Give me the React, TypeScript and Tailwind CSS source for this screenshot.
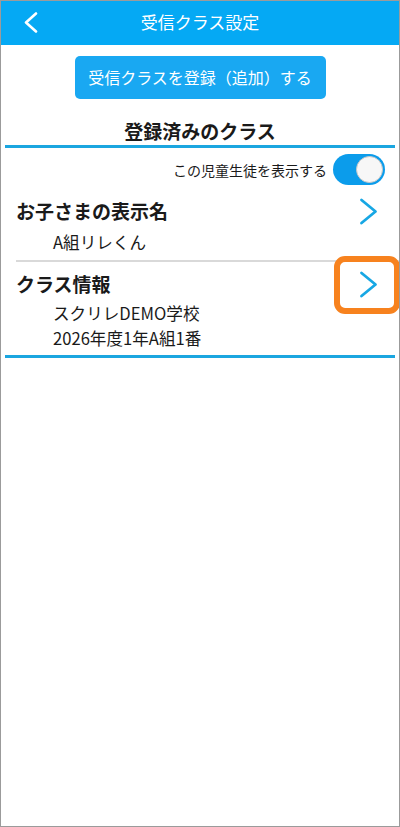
import React, { useState } from "react";

const font = { fontFamily: '"Noto Sans CJK JP", "Noto Sans", sans-serif' };

function Chevron() {
    return (
        <svg width="19" height="27" viewBox="0 0 19 27" fill="none">
            <polyline points="2.5,2 16.5,13.5 2.5,25" stroke="#17a7e4" strokeWidth="2.8" strokeLinecap="round" strokeLinejoin="round" />
        </svg>
    );
}

export default function App() {
    const [visible, setVisible] = useState(true);

    return (
        <div className="relative w-[400px] h-[827px] bg-white border border-[#9b9b9b] overflow-hidden text-[#1a1a1a]" style={font}>
            {/* header */}
            <div className="relative h-[44px] bg-[#05a9f4] flex items-center justify-center">
                <button className="absolute left-[22px] top-[11px]">
                    <svg width="17" height="21" viewBox="0 0 17 21" fill="none">
                        <polyline points="13,1.5 3,10.5 13,19.5" stroke="white" strokeWidth="2.6" strokeLinecap="round" strokeLinejoin="round" />
                    </svg>
                </button>
                <h1 className="text-white text-[17px] leading-[24px] -mt-[2px]">受信クラス設定</h1>
            </div>

            <div className="flex justify-center pt-[11px]">
                <button className="w-[251px] h-[43px] rounded-[5px] bg-[#19a8f2] text-white text-[16px] leading-[43px]">
                    受信クラスを登録（追加）する
                </button>
            </div>

            <div className="mt-[20px] h-[24px] leading-[24px] text-center text-[19px] font-bold">登録済みのクラス</div>
            <div className="mt-[2px] mx-[4px] h-[3px] bg-[#1ba6e0]" />

            <div className="flex justify-end items-center gap-[6px] pt-[6px] pr-[14px]">
                <span className="text-[14px] leading-[20px]">この児童生徒を表示する</span>
                <button
                    onClick={() => setVisible(!visible)}
                    className={`relative w-[52px] h-[31px] rounded-full ${visible ? "bg-[#0b9ceb]" : "bg-[#d0d0d0]"}`}
                >
                    <span className={`absolute top-[2px] w-[27px] h-[27px] rounded-full bg-[#f7f7f7] border border-[#c8c8c8] ${visible ? "right-[2px]" : "left-[2px]"}`} />
                </button>
            </div>

            {/* item 1 */}
            <div className="flex items-center justify-between mt-[12px] pl-[15px] pr-[21px]">
                <span className="text-[19px] leading-[28px] font-bold">お子さまの表示名</span>
                <Chevron />
            </div>
            <div className="pl-[52px] text-[16.6px] leading-[24px] mt-[5px]">A組リレくん</div>
            <div className="mt-[6px] ml-[15px] h-[2px] bg-[#d9d9d9]" />

            {/* item 2 */}
            <div className="flex items-center justify-between mt-[8px] pl-[15px] pr-[21px]">
                <span className="text-[19px] leading-[28px] font-bold">クラス情報</span>
                <Chevron />
            </div>
            <div className="pl-[52px] text-[16.6px] leading-[25px] mt-[3px]">
                <div>スクリレDEMO学校</div>
                <div>2026年度1年A組1番</div>
            </div>
            <div className="mt-[4px] mx-[4px] h-[3px] bg-[#1ba6e0]" />

            {/* highlight annotation */}
            <div className="absolute left-[333px] top-[255px] w-[66px] h-[58px] border-[6px] border-[#f7821e] rounded-[11px]" />
        </div>
    );
}
